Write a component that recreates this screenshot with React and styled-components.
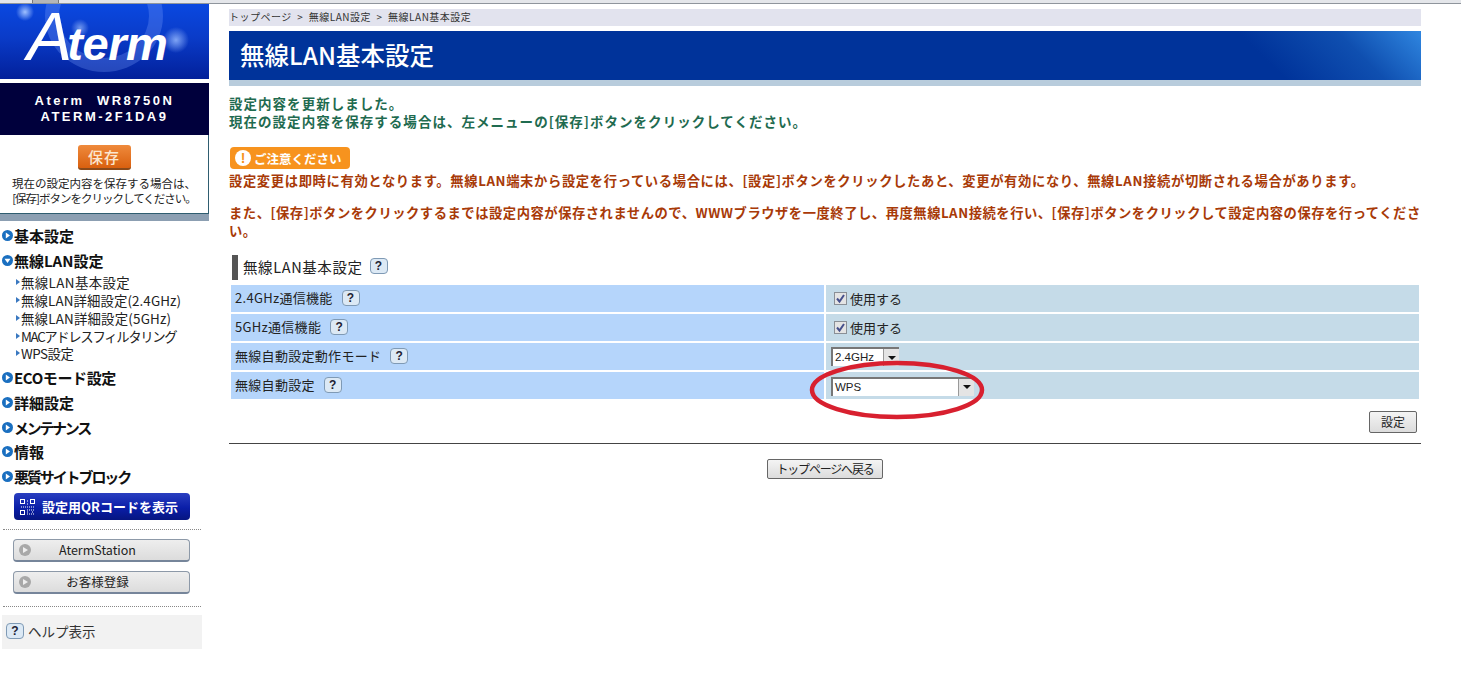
import React from 'react';
import styled, { createGlobalStyle } from 'styled-components';

const Global = createGlobalStyle`
  html, body { margin: 0; padding: 0; background: #fff; }
  body { font-family: "Noto Sans CJK JP", "Liberation Sans", sans-serif; color: #111; }
  * { box-sizing: border-box; }
`;

const Page = styled.div`
  position: relative;
  width: 1461px;
  height: 684px;
  overflow: hidden;
`;

const TopStrip = styled.div`
  display: flex;
  height: 4px;
  background: #e4e6ea;
  border-bottom: 1px solid #8f959c;
`;

const TopTab = styled.div`
  width: 27px;
  margin-left: 32px;
  background: #b4b6b8;
  border-left: 1px solid #777;
  border-right: 1px solid #777;
`;

const Layout = styled.div`
  display: flex;
  align-items: flex-start;
`;

const Sidebar = styled.aside`
  width: 209px;
  flex: none;
`;

const Logo = styled.div`
  position: relative;
  height: 75px;
  display: flex;
  align-items: baseline;
  padding: 0 0 0 27px;
  background:
    radial-gradient(circle at 25px 8px, #9fc0ff 0, rgba(120,160,255,0) 9px),
    radial-gradient(circle at 176px 36px, #7fa4f5 0, rgba(120,160,255,0) 13px),
    radial-gradient(circle at 80px 24px, #6f96ee 0, rgba(120,160,255,0) 9px),
    linear-gradient(180deg, #0a48e0 0%, #0a3bc8 45%, #02209a 100%);
`;

const LogoGlow = styled.div`
  position: absolute;
  inset: 0;
  overflow: hidden;
`;

const LogoRing = styled.div`
  position: absolute;
  left: 45px;
  top: -44px;
  width: 118px;
  height: 112px;
  border: 14px solid rgba(130, 165, 255, 0.28);
  border-radius: 50%;
`;

const LogoCap = styled.span`
  position: relative;
  font-family: "Liberation Sans", sans-serif;
  font-style: italic;
  font-size: 68px;
  line-height: 64px;
  letter-spacing: -5px;
  color: #fff;
`;

const LogoTail = styled.span`
  position: relative;
  font-family: "Liberation Sans", sans-serif;
  font-style: italic;
  font-weight: 700;
  font-size: 47px;
  line-height: 64px;
  letter-spacing: -0.5px;
  color: #fff;
`;

const ModelBox = styled.div`
  margin-top: 4px;
  height: 52px;
  background: #00003c;
  color: #fff;
  font-family: "Liberation Sans", sans-serif;
  font-size: 13px;
  font-weight: 700;
  line-height: 16px;
  letter-spacing: 2.5px;
  text-align: center;
  padding-top: 10px;
`;

const SaveBox = styled.div`
  height: 79px;
  border-right: 1px solid #2f5d70;
  border-bottom: 1px solid #2f5d70;
  text-align: center;
  padding-top: 10px;
  font-size: 11.5px;
  line-height: 14.5px;
  color: #222;
`;

const SaveNote = styled.span`
  letter-spacing: -1px;
`;

const SaveShadow = styled.div`
  height: 7px;
  background: #8c9fb2;
`;

const SaveButton = styled.div`
  width: 53px;
  height: 25px;
  margin: 0 auto 6px;
  border-radius: 3px;
  background: linear-gradient(180deg, #ef8a3c, #d9600f);
  border-bottom: 2px solid #8a4a1a;
  color: #fbe6cf;
  font-size: 15px;
  font-weight: 500;
  line-height: 23px;
  letter-spacing: 1px;
`;

const Menu = styled.nav`
  padding-top: 2px;
`;

const MenuItem = styled.div`
  display: flex;
  align-items: center;
  gap: 1px;
  height: 24.8px;
  padding-left: 2px;
  font-size: 15px;
  font-weight: 700;
  letter-spacing: ${p => p.$spacing || 0}px;
  color: #111;
`;

const SubMenu = styled.div`
  padding: 1px 0 3px 16px;
`;

const SubItem = styled.div`
  display: flex;
  align-items: center;
  height: 17.7px;
  font-size: 13.4px;
  letter-spacing: ${p => p.$spacing}px;
  color: #222;
  &::before {
    content: "";
    width: 0;
    height: 0;
    margin-right: 1px;
    border-left: 4px solid #3a78c0;
    border-top: 3px solid transparent;
    border-bottom: 3px solid transparent;
  }
`;

const QrButton = styled.div`
  display: flex;
  align-items: center;
  gap: 7px;
  width: 176px;
  height: 27px;
  margin: 4px 0 0 14px;
  padding-left: 6px;
  border-radius: 4px;
  background: linear-gradient(180deg, #2a3fc0, #0a1ea8 55%, #061580);
  color: #fff;
  font-size: 13px;
  font-weight: 700;
`;

const DottedLine = styled.div`
  height: 0;
  margin: ${p => p.$top}px 8px ${p => p.$bottom}px 3px;
  border-top: 1px dotted #888;
`;

const GreyButton = styled.div`
  position: relative;
  width: 177px;
  height: 23px;
  margin: 0 0 9px 13px;
  padding-right: 8px;
  border: 1px solid #8d99a8;
  border-bottom: 2px solid #76859a;
  border-radius: 4px;
  background: linear-gradient(180deg, #eeeeee, #dcdcdc);
  text-align: center;
  font-size: 12.5px;
  line-height: 19px;
  color: #222;
`;

const GreyDot = styled.span`
  position: absolute;
  left: 5px;
  top: 4px;
  width: 12px;
  height: 12px;
  border-radius: 50%;
  background: #a8a8a8;
  &::after {
    content: "";
    position: absolute;
    left: 4px;
    top: 3px;
    border-left: 5px solid #eee;
    border-top: 3px solid transparent;
    border-bottom: 3px solid transparent;
  }
`;

const HelpBox = styled.div`
  display: flex;
  align-items: center;
  gap: 4px;
  width: 200px;
  height: 34px;
  margin-left: 2px;
  padding: 0 0 2px 4px;
  background: #f2f2f2;
  font-size: 13.5px;
  color: #333;
`;

const Help = styled.span`
  display: inline-flex;
  align-items: center;
  justify-content: center;
  flex: none;
  width: 18px;
  height: 16px;
  margin-left: ${p => p.$gap || 0}px;
  border: 1px solid #7f9ab5;
  border-radius: 4px;
  background: #dce9f5;
  font-family: "Liberation Sans", sans-serif;
  font-size: 12px;
  font-weight: 700;
  color: #223;
`;

const Main = styled.main`
  width: 1192px;
  margin-left: 20px;
  padding-top: 5px;
`;

const Breadcrumb = styled.div`
  height: 17px;
  background: #e2e3ee;
  font-size: 10px;
  line-height: 16px;
  letter-spacing: 0.5px;
  white-space: pre;
  color: #333;
`;

const TitleBar = styled.h1`
  height: 55px;
  margin: 5px 0 0;
  padding-left: 11px;
  background:
    linear-gradient(225deg, #2f86e0 0, #0f4fb0 60px, rgba(0, 51, 154, 0) 130px),
    #00339a;
  background-size: 100% 49px, auto;
  background-repeat: no-repeat;
  border-bottom: 6px solid #b8ccdc;
  color: #fff;
  font-size: 24.5px;
  font-weight: 500;
  line-height: 48px;
`;

const Message = styled.p`
  margin: 8px 0 0;
  font-size: 13.5px;
  font-weight: 700;
  line-height: 18px;
  letter-spacing: 1.03px;
  color: #1f6b50;
`;

const Notice = styled.div`
  display: flex;
  align-items: center;
  gap: 3px;
  width: 120px;
  height: 22px;
  margin: 17px 0 0 1px;
  padding-left: 5px;
  border-radius: 4px;
  background: #f7931e;
  color: #fff;
  font-size: 12.5px;
  font-weight: 700;
`;

const NoticeMark = styled.span`
  display: flex;
  align-items: center;
  justify-content: center;
  width: 16px;
  height: 16px;
  border-radius: 50%;
  background: #fff;
  color: #f7931e;
  font-family: "Liberation Sans", sans-serif;
  font-size: 14px;
  font-weight: 700;
`;

const Warning = styled.p`
  margin: ${p => p.$top}px 0 0;
  font-size: 13.3px;
  font-weight: 700;
  line-height: 18px;
  letter-spacing: ${p => p.$spacing}px;
  color: #a83a08;
`;

const SectionHead = styled.div`
  display: flex;
  align-items: center;
  height: 25px;
  margin: 15px 0 5px 3px;
  padding: 0 0 3px 5px;
  border-left: 6px solid #555;
  font-size: 14.5px;
  letter-spacing: 0.6px;
  color: #222;
`;

const FormGrid = styled.div`
  display: grid;
  grid-template-columns: 593px 593px;
  gap: 2px;
  margin-left: 2px;
  width: 1188px;
`;

const LabelCell = styled.div`
  display: flex;
  align-items: center;
  height: 27px;
  padding: 0 0 2px 4px;
  background: #b5d5fb;
  font-size: 13px;
  letter-spacing: 0.3px;
  color: #222;
`;

const ValueCell = styled.div`
  position: relative;
  display: flex;
  align-items: center;
  height: 27px;
  padding-left: 8px;
  background: #c5dbe8;
  font-size: 13px;
  color: #222;
`;

const Check = styled.span`
  display: inline-flex;
  width: 13px;
  height: 13px;
  margin-right: 3px;
  border: 1px solid #8a8f96;
  background: #e4e4e4;
`;

const Select = styled.div`
  display: flex;
  width: ${p => p.$width}px;
  height: 19px;
  margin: ${p => p.$low ? 1 : 0}px 0 0 -3px;
  border-top: 2px solid #777;
  border-left: 2px solid #777;
  background: #fff;
  font-family: "Liberation Sans", sans-serif;
  font-size: 11.5px;
  line-height: 16px;
  color: #222;
`;

const SelectValue = styled.span`
  flex: 1;
  padding-left: 2px;
`;

const SelectArrow = styled.span`
  display: flex;
  align-items: center;
  justify-content: center;
  width: 16px;
  background: #e4e4e4;
  border-left: 1px solid #999;
  &::after {
    content: "";
    border-top: 4px solid #111;
    border-left: 4px solid transparent;
    border-right: 4px solid transparent;
  }
`;

const ButtonRow = styled.div`
  display: flex;
  justify-content: ${p => p.$center ? 'center' : 'flex-end'};
  padding-right: ${p => p.$center ? '0' : '4px'};
  margin-top: ${p => p.$top}px;
`;

const PlainButton = styled.div`
  width: ${p => p.$width}px;
  height: ${p => p.$height}px;
  border: 1px solid #666;
  border-radius: 2px;
  background: linear-gradient(180deg, #f4f4f4, #dcdcdc);
  text-align: center;
  font-size: 12px;
  line-height: ${p => p.$height - 3}px;
  letter-spacing: ${p => p.$spacing || 0}px;
  color: #222;
`;

const Rule = styled.hr`
  margin: 10px 0 0;
  border: 0;
  border-top: 1px solid #444;
`;

const Circled = styled.svg`
  position: absolute;
  left: 806px;
  top: 358px;
`;

const MenuDot = ({ open }) => (
  <svg width="11" height="11" viewBox="0 0 11 11" style={{ flex: 'none' }}>
    <circle cx="5.5" cy="5.5" r="5.5" fill="#1a6fc0" />
    {open
      ? <path d="M2.5 3.8 H8.5 L5.5 8 Z" fill="#fff" />
      : <path d="M3.8 2.5 L8 5.5 L3.8 8.5 Z" fill="#fff" />}
  </svg>
);

const QrIcon = () => (
  <svg width="15" height="16" viewBox="0 0 15 16" fill="none" stroke="#fff">
    <rect x="0.5" y="0.5" width="4" height="4" />
    <rect x="10.5" y="0.5" width="4" height="4" />
    <rect x="0.5" y="11.5" width="4" height="4" />
    <path d="M1 8h13M7 2h2M7 5h2M7 11h8M7 13h2M12 13h2M7 15h8" strokeDasharray="1 1" />
  </svg>
);

const Tick = () => (
  <svg width="11" height="11" viewBox="0 0 11 11">
    <path d="M2 5.5 L4.5 8.5 L9 2" fill="none" stroke="#46508c" strokeWidth="2" />
  </svg>
);

const Row = ({ label, children }) => (
  <>
    <LabelCell>{label}<Help $gap={9}>?</Help></LabelCell>
    <ValueCell>{children}</ValueCell>
  </>
);

const UseIt = () => <><Check><Tick /></Check>使用する</>;

export default function App() {
  return (
    <Page>
      <Global />
      <TopStrip><TopTab /></TopStrip>
      <Layout>
        <Sidebar>
          <Logo>
            <LogoGlow><LogoRing /></LogoGlow>
            <LogoCap>A</LogoCap><LogoTail>term</LogoTail>
          </Logo>
          <ModelBox>Aterm&nbsp; WR8750N<br />ATERM-2F1DA9</ModelBox>
          <SaveBox>
            <SaveButton>保存</SaveButton>
            現在の設定内容を保存する場合は、<br /><SaveNote>[保存]ボタンをクリックしてください。</SaveNote>
          </SaveBox>
          <SaveShadow />
          <Menu>
            <MenuItem><MenuDot />基本設定</MenuItem>
            <MenuItem><MenuDot open />無線LAN設定</MenuItem>
            <SubMenu>
              <SubItem $spacing={0.4}>無線LAN基本設定</SubItem>
              <SubItem $spacing={0.1}>無線LAN詳細設定(2.4GHz)</SubItem>
              <SubItem $spacing={0.2}>無線LAN詳細設定(5GHz)</SubItem>
              <SubItem $spacing={-1.37}>MACアドレスフィルタリング</SubItem>
              <SubItem $spacing={-0.5}>WPS設定</SubItem>
            </SubMenu>
            <MenuItem $spacing={-0.4}><MenuDot />ECOモード設定</MenuItem>
            <MenuItem><MenuDot />詳細設定</MenuItem>
            <MenuItem $spacing={-2.3}><MenuDot />メンテナンス</MenuItem>
            <MenuItem><MenuDot />情報</MenuItem>
            <MenuItem $spacing={-2.1}><MenuDot />悪質サイトブロック</MenuItem>
          </Menu>
          <QrButton><QrIcon />設定用QRコードを表示</QrButton>
          <DottedLine $top={9} $bottom={9} />
          <GreyButton><GreyDot />AtermStation</GreyButton>
          <GreyButton><GreyDot />お客様登録</GreyButton>
          <DottedLine $top={12} $bottom={8} />
          <HelpBox><Help>?</Help>ヘルプ表示</HelpBox>
        </Sidebar>
        <Main>
          <Breadcrumb>トップページ  &gt;  無線LAN設定  &gt;  無線LAN基本設定</Breadcrumb>
          <TitleBar>無線LAN基本設定</TitleBar>
          <Message>
            設定内容を更新しました。<br />
            現在の設定内容を保存する場合は、左メニューの[保存]ボタンをクリックしてください。
          </Message>
          <Notice><NoticeMark>!</NoticeMark>ご注意ください</Notice>
          <Warning $top={3} $spacing={0.64}>設定変更は即時に有効となります。無線LAN端末から設定を行っている場合には、[設定]ボタンをクリックしたあと、変更が有効になり、無線LAN接続が切断される場合があります。</Warning>
          <Warning $top={14} $spacing={0.53}>また、[保存]ボタンをクリックするまでは設定内容が保存されませんので、WWWブラウザを一度終了し、再度無線LAN接続を行い、[保存]ボタンをクリックして設定内容の保存を行ってください。</Warning>
          <SectionHead>無線LAN基本設定<Help $gap={7}>?</Help></SectionHead>
          <FormGrid>
            <Row label="2.4GHz通信機能"><UseIt /></Row>
            <Row label="5GHz通信機能"><UseIt /></Row>
            <Row label="無線自動設定動作モード">
              <Select $width={68}><SelectValue>2.4GHz</SelectValue><SelectArrow /></Select>
            </Row>
            <Row label="無線自動設定">
              <Select $width={143} $low><SelectValue>WPS</SelectValue><SelectArrow /></Select>
            </Row>
          </FormGrid>
          <ButtonRow $top={12}><PlainButton $width={48} $height={22}>設定</PlainButton></ButtonRow>
          <Rule />
          <ButtonRow $center $top={15}><PlainButton $width={116} $height={20} $spacing={-1.2}>トップページへ戻る</PlainButton></ButtonRow>
        </Main>
      </Layout>
      <Circled width="184" height="64" viewBox="0 0 184 64">
        <ellipse cx="91" cy="32" rx="85" ry="27" fill="none" stroke="#d8202f" strokeWidth="4.5" />
      </Circled>
    </Page>
  );
}
